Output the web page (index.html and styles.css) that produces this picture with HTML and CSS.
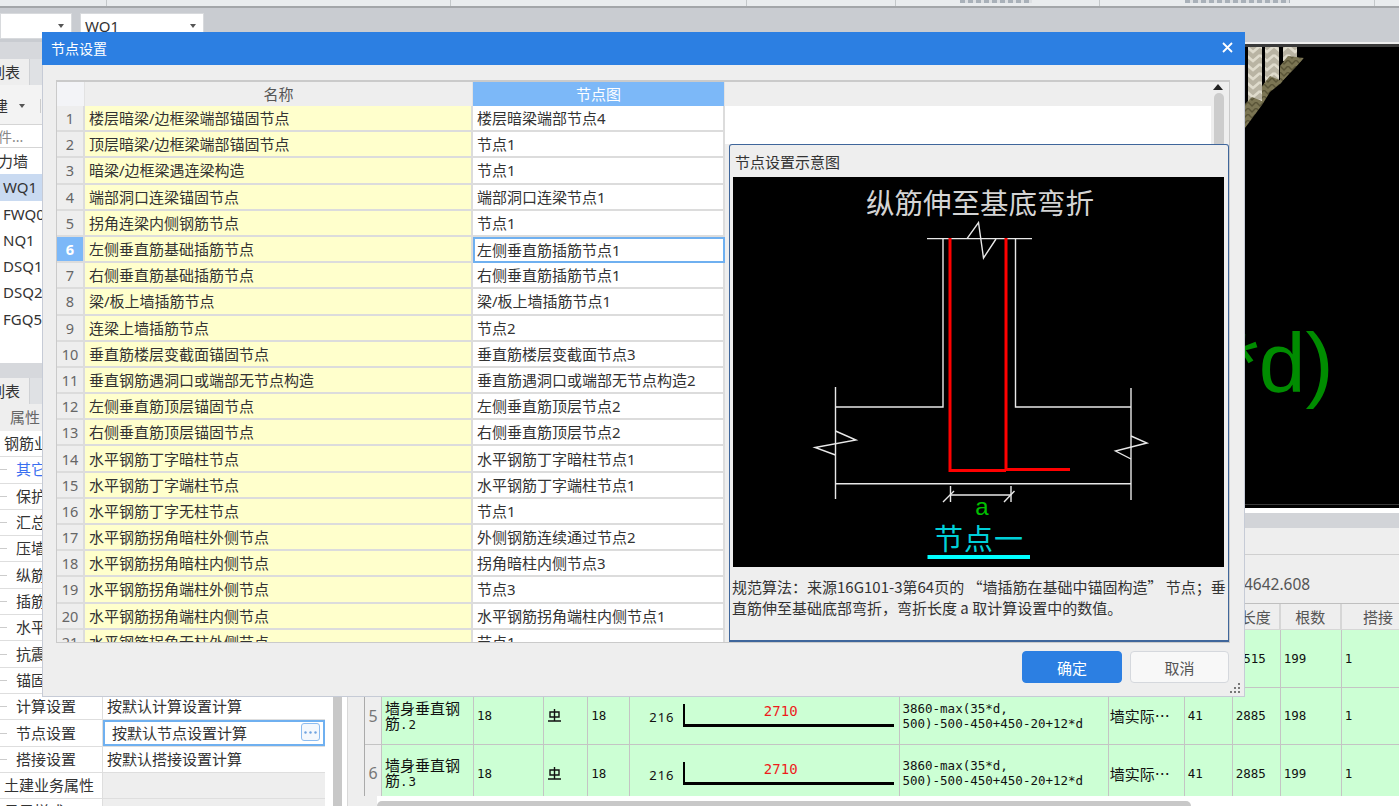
FILE: index.html
```html
<!DOCTYPE html>
<html lang="zh-CN">

<head>
    <meta charset="UTF-8">
    <meta name="viewport" content="width=device-width, initial-scale=1.0">
    <title>节点设置</title>
    <link rel="stylesheet" href="styles.css">
</head>

<body>
    <div class="ribbon">
        <div class="ribbon-cell w107"></div>
        <div class="ribbon-cell w344"></div>
        <div class="ribbon-cell w296"></div>
        <div class="ribbon-cell w149"></div>
        <div class="ribbon-cell w204"><span class="ribbon-mark mark-a"></span></div>
        <div class="ribbon-cell w275"><span class="ribbon-mark mark-b"></span></div>
    </div>

    <div class="toolbar">
        <div class="select select-first"><span class="caret"></span></div>
        <div class="select select-second">WQ1<span class="caret"></span></div>
    </div>

    <div class="main">
        <div class="left">
            <div class="panel-top">
                <div class="strip"></div>
                <div class="tab-row"><div class="tab">列表</div></div>
                <div class="tool-row"><span class="tool-new">新建</span><span class="caret"></span><span class="tool-sep"></span></div>
                <div class="search">搜索构件...</div>
                <div class="list">
                    <div class="list-item list-group">剪力墙</div>
                    <div class="list-item selected">WQ1</div>
                    <div class="list-item">FWQ0</div>
                    <div class="list-item">NQ1</div>
                    <div class="list-item">DSQ1</div>
                    <div class="list-item">DSQ2</div>
                    <div class="list-item">FGQ5</div>
                </div>
            </div>

            <div class="panel-bottom">
                <div class="strip"></div>
                <div class="tab-row"><div class="tab">列表</div></div>
                <div class="prop-head">属性</div>
                <div class="prop-body">
                    <div class="prop-table">
                        <div class="prop-row section"><div class="prop-label">钢筋业务属性</div><div class="prop-value"></div></div>
                        <div class="prop-row"><div class="prop-label tree link">其它钢筋</div><div class="prop-value"></div></div>
                        <div class="prop-row"><div class="prop-label tree">保护层厚度</div><div class="prop-value"></div></div>
                        <div class="prop-row"><div class="prop-label tree">汇总信息</div><div class="prop-value"></div></div>
                        <div class="prop-row"><div class="prop-label tree">压墙筋</div><div class="prop-value"></div></div>
                        <div class="prop-row"><div class="prop-label tree">纵筋构造</div><div class="prop-value"></div></div>
                        <div class="prop-row"><div class="prop-label tree">插筋信息</div><div class="prop-value"></div></div>
                        <div class="prop-row"><div class="prop-label tree">水平分布筋</div><div class="prop-value"></div></div>
                        <div class="prop-row"><div class="prop-label tree">抗震等级</div><div class="prop-value"></div></div>
                        <div class="prop-row"><div class="prop-label tree">锚固搭接</div><div class="prop-value"></div></div>
                        <div class="prop-row"><div class="prop-label tree">计算设置</div><div class="prop-value">按默认计算设置计算</div></div>
                        <div class="prop-row"><div class="prop-label tree">节点设置</div>
                            <div class="prop-value editing">按默认节点设置计算
                                <span class="more-btn">
                                    <svg width="13" height="3" viewBox="0 0 13 3"><circle cx="1.5" cy="1.5" r="1.2"/><circle cx="6.5" cy="1.5" r="1.2"/><circle cx="11.5" cy="1.5" r="1.2"/></svg>
                                </span>
                            </div>
                        </div>
                        <div class="prop-row"><div class="prop-label tree">搭接设置</div><div class="prop-value">按默认搭接设置计算</div></div>
                        <div class="prop-row section grey"><div class="prop-label">土建业务属性</div><div class="prop-value"></div></div>
                        <div class="prop-row section grey"><div class="prop-label">显示样式</div><div class="prop-value"></div></div>
                    </div>
                    <div class="prop-scroll"></div>
                </div>
            </div>
        </div>

        <div class="right">
            <div class="viewer">
                <svg class="rope" width="67" height="82" viewBox="1245 47 67 82">
                    <defs>
                        <pattern id="braid" width="14" height="9" patternUnits="userSpaceOnUse">
                            <rect width="14" height="9" fill="#b9b4a3"/>
                            <polyline points="0,1 7,7 14,1" fill="none" stroke="#dfdbcc" stroke-width="2.5"/>
                        </pattern>
                        <pattern id="strand" width="8" height="6" patternUnits="userSpaceOnUse">
                            <rect width="8" height="6" fill="#7b7553"/>
                            <polyline points="0,0 4,4 8,0" fill="none" stroke="#5a5538" stroke-width="1.5"/>
                        </pattern>
                        <clipPath id="ropeClip">
                            <polygon points="1245,47 1312,47 1301,62 1290,73 1280,84 1270,92 1262,105 1245,128"/>
                        </clipPath>
                    </defs>
                    <g clip-path="url(#ropeClip)">
                        <rect x="1248" y="47" width="14" height="56" fill="url(#braid)"/>
                        <rect x="1265" y="47" width="14" height="36" fill="url(#braid)"/>
                        <rect x="1283" y="47" width="14" height="14" fill="url(#braid)"/>
                        <polygon points="1245,104 1252,97 1264,102 1264,128 1245,128" fill="url(#strand)"/>
                        <polygon points="1262,86 1270,76 1284,82 1275,98 1262,104" fill="url(#strand)"/>
                        <polygon points="1280,66 1288,56 1304,58 1290,74 1280,84" fill="url(#strand)"/>
                        <rect x="1245" y="61" width="3" height="6" fill="#000"/>
                        <rect x="1262" y="60" width="3" height="6" fill="#000"/>
                        <rect x="1245" y="90" width="3" height="8" fill="#000"/>
                    </g>
                </svg>
                <div class="viewer-text">*d)</div>
            </div>
            <div class="splitter"></div>
            <div class="band"></div>
            <div class="info-bar"></div>
            <div class="sum-row">4642.608</div>

            <div class="steel-wrap">
                <table class="steel-table">
                    <colgroup>
                        <col class="c18"><col class="c92"><col class="c70"><col class="c44"><col class="c42"><col class="c270">
                        <col class="c208"><col class="c76"><col class="c48"><col class="c48"><col class="c61"><col class="c74">
                    </colgroup>
                    <tr class="steel-head">
                        <th></th><th>筋号</th><th>直径</th><th>级别</th><th>图号</th><th>图形</th>
                        <th>计算公式</th><th>公式描述</th><th>长度</th><th>长度</th><th>根数</th><th>搭接</th>
                    </tr>
                    <tr>
                        <td class="no">4</td>
                        <td class="name">墙身垂直钢<br>筋<span class="mono">.1</span></td>
                        <td>18</td>
                        <td><svg class="grade" width="13" height="13" viewBox="0 0 13 13"><path d="M2 3h9v5H2zM6.5 0v12M0 12h13" fill="none" stroke="#111" stroke-width="1.4"/></svg></td>
                        <td>18</td>
                        <td><div class="shape"><span class="shape-side">216</span><div class="rebar"><span>2340</span></div></div></td>
                        <td class="formula">3860-max(35*d,<br>500)-500-450+450-20+12*d</td>
                        <td class="name desc">墙实际⋯</td>
                        <td>41</td>
                        <td>2515</td>
                        <td>199</td>
                        <td>1</td>
                    </tr>
                    <tr>
                        <td class="no">5</td>
                        <td class="name">墙身垂直钢<br>筋<span class="mono">.2</span></td>
                        <td>18</td>
                        <td><svg class="grade" width="13" height="13" viewBox="0 0 13 13"><path d="M2 3h9v5H2zM6.5 0v12M0 12h13" fill="none" stroke="#111" stroke-width="1.4"/></svg></td>
                        <td>18</td>
                        <td><div class="shape"><span class="shape-side">216</span><div class="rebar"><span>2710</span></div></div></td>
                        <td class="formula">3860-max(35*d,<br>500)-500-450+450-20+12*d</td>
                        <td class="name desc">墙实际⋯</td>
                        <td>41</td>
                        <td>2885</td>
                        <td>198</td>
                        <td>1</td>
                    </tr>
                    <tr>
                        <td class="no">6</td>
                        <td class="name">墙身垂直钢<br>筋<span class="mono">.3</span></td>
                        <td>18</td>
                        <td><svg class="grade" width="13" height="13" viewBox="0 0 13 13"><path d="M2 3h9v5H2zM6.5 0v12M0 12h13" fill="none" stroke="#111" stroke-width="1.4"/></svg></td>
                        <td>18</td>
                        <td><div class="shape"><span class="shape-side">216</span><div class="rebar"><span>2710</span></div></div></td>
                        <td class="formula">3860-max(35*d,<br>500)-500-450+450-20+12*d</td>
                        <td class="name desc">墙实际⋯</td>
                        <td>41</td>
                        <td>2885</td>
                        <td>199</td>
                        <td>1</td>
                    </tr>
                </table>
            </div>
            <div class="h-scroll"><div class="h-thumb"></div></div>
        </div>
    </div>

    <!-- dialog sits over the app window -->
    <div class="dialog">
        <div class="dialog-title">
            <span>节点设置</span>
            <svg class="close-icon" width="11" height="11" viewBox="0 0 11 11"><path d="M1 1l9 9M10 1l-9 9" stroke="#fff" stroke-width="1.8" fill="none"/></svg>
        </div>

        <div class="dialog-body">
            <div class="grid">
                <table class="node-table">
                    <colgroup><col class="col-no"><col class="col-name"><col class="col-val"></colgroup>
                    <tr class="node-head"><th></th><th>名称</th><th class="active">节点图</th></tr>
                    <tr><td class="no">1</td><td class="name">楼层暗梁/边框梁端部锚固节点</td><td>楼层暗梁端部节点4</td></tr>
                    <tr><td class="no">2</td><td class="name">顶层暗梁/边框梁端部锚固节点</td><td>节点1</td></tr>
                    <tr><td class="no">3</td><td class="name">暗梁/边框梁遇连梁构造</td><td>节点1</td></tr>
                    <tr><td class="no">4</td><td class="name">端部洞口连梁锚固节点</td><td>端部洞口连梁节点1</td></tr>
                    <tr><td class="no">5</td><td class="name">拐角连梁内侧钢筋节点</td><td>节点1</td></tr>
                    <tr><td class="no current">6</td><td class="name">左侧垂直筋基础插筋节点</td><td class="focus">左侧垂直筋插筋节点1</td></tr>
                    <tr><td class="no">7</td><td class="name">右侧垂直筋基础插筋节点</td><td>右侧垂直筋插筋节点1</td></tr>
                    <tr><td class="no">8</td><td class="name">梁/板上墙插筋节点</td><td>梁/板上墙插筋节点1</td></tr>
                    <tr><td class="no">9</td><td class="name">连梁上墙插筋节点</td><td>节点2</td></tr>
                    <tr><td class="no">10</td><td class="name">垂直筋楼层变截面锚固节点</td><td>垂直筋楼层变截面节点3</td></tr>
                    <tr><td class="no">11</td><td class="name">垂直钢筋遇洞口或端部无节点构造</td><td>垂直筋遇洞口或端部无节点构造2</td></tr>
                    <tr><td class="no">12</td><td class="name">左侧垂直筋顶层锚固节点</td><td>左侧垂直筋顶层节点2</td></tr>
                    <tr><td class="no">13</td><td class="name">右侧垂直筋顶层锚固节点</td><td>右侧垂直筋顶层节点2</td></tr>
                    <tr><td class="no">14</td><td class="name">水平钢筋丁字暗柱节点</td><td>水平钢筋丁字暗柱节点1</td></tr>
                    <tr><td class="no">15</td><td class="name">水平钢筋丁字端柱节点</td><td>水平钢筋丁字端柱节点1</td></tr>
                    <tr><td class="no">16</td><td class="name">水平钢筋丁字无柱节点</td><td>节点1</td></tr>
                    <tr><td class="no">17</td><td class="name">水平钢筋拐角暗柱外侧节点</td><td>外侧钢筋连续通过节点2</td></tr>
                    <tr><td class="no">18</td><td class="name">水平钢筋拐角暗柱内侧节点</td><td>拐角暗柱内侧节点3</td></tr>
                    <tr><td class="no">19</td><td class="name">水平钢筋拐角端柱外侧节点</td><td>节点3</td></tr>
                    <tr><td class="no">20</td><td class="name">水平钢筋拐角端柱内侧节点</td><td>水平钢筋拐角端柱内侧节点1</td></tr>
                    <tr><td class="no">21</td><td class="name">水平钢筋拐角无柱外侧节点</td><td>节点1</td></tr>
                </table>

                <div class="grid-side">
                    <div class="side-top">
                        <div class="side-blank">
                            <div class="side-head"></div>
                        </div>
                        <div class="side-scroll">
                            <span class="scroll-up"></span>
                            <div class="scroll-thumb"></div>
                        </div>
                    </div>

                    <div class="preview">
                        <div class="preview-title">节点设置示意图</div>
                        <svg class="drawing" width="491" height="390" viewBox="733 177 491 390">
                            <text class="draw-title" x="980" y="214" text-anchor="middle">纵筋伸至基底弯折</text>

                            <g fill="none" stroke="#e8e8e8" stroke-width="1.4">
                                <path d="M927 238.6H1032"/>
                                <path d="M967 238.6L978.5 222.5L983.5 258L996 239"/>
                                <path d="M943 238.6V407H835.5"/>
                                <path d="M1015.5 238.6V407H1131"/>
                                <path d="M835.5 387V499"/>
                                <path d="M1131 388V500"/>
                                <path d="M835.5 483.7H1131"/>
                                <path d="M835.5 431L856 440L815 447.5L835.5 455"/>
                                <path d="M1131 436L1147 443L1115.5 451L1131 459"/>
                                <path d="M950 495H1011"/>
                                <path d="M950.5 486V502M1011 486V502"/>
                                <path d="M943 502L954 491M1004 502L1014.5 491"/>
                            </g>

                            <g fill="none" stroke="#ff0000" stroke-width="3">
                                <path d="M950 238V470.5H1006"/>
                                <path d="M1006 238V470"/>
                                <path d="M1006 469.5H1070"/>
                            </g>

                            <text class="draw-a" x="982" y="515" text-anchor="middle">a</text>
                            <text class="draw-node" x="979" y="550" text-anchor="middle">节点一</text>
                            <rect x="927.5" y="555" width="102.5" height="4" fill="#00ffff"/>
                        </svg>
                        <div class="preview-text">规范算法：来源16G101-3第64页的 “墙插筋在基础中锚固构造” 节点；垂直筋伸至基础底部弯折，弯折长度 a 取计算设置中的数值。</div>
                    </div>
                </div>
            </div>
        </div>

        <div class="dialog-footer">
            <button class="btn btn-primary" type="button">确定</button>
            <button class="btn btn-cancel" type="button">取消</button>
        </div>
        <svg class="grip" width="10" height="10" viewBox="0 0 10 10"><path d="M8 0h2v2H8zM4 4h2v2H4zM8 4h2v2H8zM0 8h2v2H0zM4 8h2v2H4zM8 8h2v2H8z" fill="#777"/></svg>
    </div>
</body>

</html>
```

FILE: styles.css
```css
* {
    margin: 0;
    padding: 0;
    box-sizing: border-box;
    font-family: "Noto Sans", "Noto Sans CJK SC", sans-serif;
}

body {
    position: relative;
    width: 1399px;
    height: 806px;
    overflow: hidden;
    background-color: #eeeeee;
    color: #333;
    font-size: 15px;
}

/* top of the app window */
.ribbon {
    display: flex;
    height: 8px;
    background-color: #e9ecee;
    border-bottom: 2px solid #a3a6a9;
}

.ribbon-cell {
    position: relative;
    height: 6px;
    border-right: 1px solid #c4c8ca;
}

.w107 { width: 107px; }
.w344 { width: 344px; }
.w296 { width: 296px; }
.w149 { width: 149px; }
.w204 { width: 204px; }
.w275 { width: 275px; }

.ribbon-mark {
    position: absolute;
    top: 0;
    height: 3px;
    background: repeating-linear-gradient(90deg, #a9b1b9 0 5px, #dde0e3 5px 8px);
}

.mark-a { left: 64px; width: 72px; }
.mark-b { left: 85px; width: 105px; }

.toolbar {
    display: flex;
    gap: 8px;
    height: 34px;
    padding-top: 5px;
    background-color: #c9ccd1;
}

.select {
    position: relative;
    height: 26px;
    padding: 2px 4px;
    background-color: #fff;
    border: 1px solid #d8dadd;
    line-height: 20px;
}

.select-first { width: 72px; }
.select-second { width: 124px; }

.caret {
    display: inline-block;
    width: 0;
    height: 0;
    border-left: 3.5px solid transparent;
    border-right: 3.5px solid transparent;
    border-top: 4px solid #555;
}

.select .caret {
    position: absolute;
    right: 7px;
    top: 10px;
}

.main {
    display: flex;
    height: 764px;
}

/* left column */
.left {
    width: 347px;
    flex-shrink: 0;
    overflow: hidden;
    background-color: #fff;
}

.panel-top {
    height: 321px;
    overflow: hidden;
}

.strip {
    height: 15px;
    background-color: #d6d8dc;
}

.panel-top .strip {
    height: 17px;
}

.tab-row {
    height: 26px;
    background-color: #dfe1e4;
}

.tab {
    width: 50px;
    height: 26px;
    margin-left: -20px;
    padding-left: 10px;
    line-height: 26px;
    background-color: #eeeeee;
    border-right: 1px solid #cfd1d4;
}

.tool-row {
    display: flex;
    align-items: center;
    height: 39px;
    padding-top: 2px;
    background-color: #f3f3f3;
}

.tool-new {
    margin-left: -22px;
    margin-right: 11px;
}

.tool-sep {
    width: 1px;
    height: 14px;
    margin-left: 15px;
    background-color: #ccc;
}

.search {
    height: 24px;
    margin-left: -44px;
    line-height: 23px;
    font-size: 14px;
    color: #888;
    border-top: 1px solid #d5d5d5;
    border-bottom: 1px solid #d5d5d5;
    white-space: nowrap;
}

.list-item {
    height: 26.3px;
    padding-left: 3px;
    line-height: 26px;
    background-color: #fff;
    white-space: nowrap;
}

.list-group {
    margin-left: -17px;
    padding-left: 0;
}

.list-item.selected {
    background-color: #c9daf1;
}

.prop-head {
    height: 27px;
    padding-left: 10px;
    line-height: 27px;
    color: #666;
    background-color: #eeeeee;
}

.prop-body {
    display: flex;
}

.prop-table {
    width: 325px;
    flex-shrink: 0;
}

.prop-row {
    display: grid;
    grid-template-columns: 103px 222px;
    height: 26.3px;
    line-height: 25px;
    border-bottom: 1px solid #dedede;
}

.prop-label {
    display: flex;
    align-items: center;
    padding-left: 4px;
    white-space: nowrap;
    border-right: 1px solid #dedede;
    overflow: hidden;
}

.prop-label.tree {
    padding-left: 0;
}

.prop-label.tree::before {
    content: "";
    flex-shrink: 0;
    width: 7px;
    height: 1px;
    margin-right: 9px;
    background-color: #ccc;
}

.prop-label.link {
    color: #3a6ff0;
}

.prop-value {
    position: relative;
    padding-left: 4px;
    white-space: nowrap;
}

.prop-row.grey .prop-value {
    background-color: #eeeeee;
}

.prop-value.editing {
    padding-left: 7px;
    line-height: 22px;
    border: 2px solid #6fb0f0;
}

.more-btn {
    position: absolute;
    right: 3px;
    top: 1px;
    display: flex;
    align-items: center;
    justify-content: center;
    width: 19px;
    height: 18px;
    background-color: #f4f8fd;
    border: 1px solid #8cbcf0;
    border-radius: 3px;
    fill: #6fa3e0;
}

.prop-scroll {
    width: 9px;
    height: 500px;
    margin-left: 8px;
    background-color: #c8c8c8;
}

/* right column */
.right {
    flex: 1;
    min-width: 0;
    border-left: 1px solid #d8d8d8;
    overflow: hidden;
}

.viewer {
    position: relative;
    height: 464px;
    margin-top: 2px;
    overflow: hidden;
    background-color: #000;
    border-top: 3px solid #3a3a3a;
    border-bottom: 3px solid #000;
    box-shadow: inset 0 -1px 0 #3a3a3a;
}

.rope {
    position: absolute;
    right: 87px;
    top: 0;
}

/* text on the 3d canvas */
.viewer-text {
    position: absolute;
    left: 878px;
    top: 266px;
    font-family: "Liberation Sans", sans-serif;
    font-size: 84px;
    line-height: 100px;
    color: #008c00;
    white-space: nowrap;
}

.splitter {
    height: 5px;
    background-color: #fff;
}

.band {
    height: 15px;
    background-color: #d2d4d8;
}

.info-bar {
    height: 27px;
    background-color: #eeeeee;
    border-bottom: 1px solid #cfcfcf;
}

.sum-row {
    height: 49px;
    padding: 19px 0 0 896px;
    line-height: 20px;
    color: #555;
    font-size: 15.5px;
    background-color: #eeeeee;
    border-bottom: 1px solid #bfbfbf;
}

.steel-wrap {
    height: 192px;
    margin-left: 16px;
    overflow: hidden;
    border-left: 1px solid #aaa;
}

.steel-table {
    width: 1051px;
    table-layout: fixed;
    border-collapse: separate;
    border-spacing: 0;
}

.c18 { width: 17px; }
.c92 { width: 92px; }
.c70 { width: 70px; }
.c44 { width: 44px; }
.c42 { width: 42px; }
.c270 { width: 270px; }
.c208 { width: 208px; }
.c76 { width: 76px; }
.c48 { width: 48px; }
.c61 { width: 61px; }
.c74 { width: 74px; }

.steel-head th {
    height: 26px;
    font-weight: normal;
    color: #555;
    background-color: #eeeeee;
    border-right: 2px solid #d6d6d6;
    border-bottom: 1px solid #d6d6d6;
}

.steel-table td {
    height: 57.5px;
    padding-left: 3px;
    font-family: "DejaVu Sans Mono", "Noto Sans CJK SC", monospace;
    font-size: 12.5px;
    color: #111;
    background-color: #ccffd4;
    border-right: 1px solid #c4c4c4;
    border-bottom: 1px solid #c4c4c4;
    white-space: nowrap;
}

.steel-table td.no {
    padding-left: 0;
    text-align: center;
    font-family: "Noto Sans", sans-serif;
    font-size: 16px;
    color: #777;
    background-color: #eeeeee;
}

.steel-table td.name {
    padding-left: 3px;
    font-family: "Noto Sans CJK SC", sans-serif;
    font-size: 15px;
    line-height: 15px;
}

.steel-table td.desc {
    padding-left: 1px;
}

.mono {
    font-family: "DejaVu Sans Mono", monospace;
    font-size: 12.5px;
    letter-spacing: 1px;
}

.steel-table td.formula {
    padding-left: 2px;
    line-height: 15px;
}

.grade {
    display: block;
    margin-left: 1px;
}

.shape {
    display: flex;
    align-items: flex-end;
    padding-left: 16px;
}

.shape-side {
    width: 34px;
    padding-bottom: 1px;
    font-size: 13px;
    letter-spacing: 1px;
}

.rebar {
    width: 211px;
    height: 23px;
    border-left: 2px solid #000;
    border-bottom: 3px solid #000;
    text-align: center;
    line-height: 13px;
    color: #ee1c1c;
    font-size: 14px;
}

.rebar span {
    font-family: "DejaVu Sans Mono", monospace;
    position: relative;
    left: -9px;
}

.h-scroll {
    height: 11px;
    margin-left: 29px;
    padding-top: 5px;
    background-color: #fff;
}

.h-thumb {
    width: 814px;
    height: 12px;
    background-color: #c8c8c8;
    border-radius: 5px;
}

/* dialog */
.dialog {
    position: absolute;
    left: 42px;
    top: 32px;
    width: 1203px;
    height: 665px;
    background-color: #eeeeee;
    border-right: 1px solid #c6cbd6;
    border-bottom: 1px solid #c6cbd6;
    border-left: 1px solid #c6cbd6;
}

.dialog-title {
    display: flex;
    align-items: center;
    justify-content: space-between;
    height: 33px;
    margin: 0 -1px;
    padding: 0 12px 2px 9px;
    color: #fff;
    font-size: 14px;
    background-color: #2c7fe2;
}

.dialog-body {
    padding: 15px 14px 0 13px;
}

.grid {
    display: flex;
    height: 563px;
    overflow: hidden;
    background-color: #eeeeee;
    border: 1px solid #cacaca;
    border-top-width: 2px;
}

.node-table {
    width: 668px;
    flex-shrink: 0;
    align-self: flex-start;
    table-layout: fixed;
    border-collapse: separate;
    border-spacing: 0;
}

.col-no { width: 28px; }
.col-name { width: 388px; }
.col-val { width: 252px; }

.node-head th {
    height: 24px;
    padding-bottom: 2px;
    font-weight: normal;
    color: #555;
    background-color: #eeeeee;
    border-right: 1px solid #e2e2e2;
}

.node-head th:first-child {
    background-color: #f3f4f7;
}

.node-head th.active {
    color: #fff;
    background-color: #7cb8f8;
}

.node-table td {
    height: 26.2px;
    padding: 0 0 0 4px;
    line-height: 22px;
    background-color: #fff;
    border-bottom: 2px solid #dcdcdc;
    border-right: 2px solid #dcdcdc;
    white-space: nowrap;
    overflow: hidden;
}

.node-table td.no {
    padding: 0;
    text-align: center;
    color: #666;
    font-size: 14.5px;
    background-color: #eeeeee;
}

.node-table td.no.current {
    color: #fff;
    font-weight: bold;
    background-color: #7cb8f8;
}

.node-table td.name {
    background-color: #ffffcc;
}

.node-table td.focus {
    padding-left: 2px;
    border: 2px solid #6fb0f0;
}

.grid-side {
    flex: 1;
    min-width: 0;
}

.side-top {
    display: flex;
    height: 62px;
}

.side-blank {
    flex: 1;
    background-color: #fff;
}

.side-head {
    height: 24px;
    background-color: #eeeeee;
}

.side-scroll {
    position: relative;
    width: 18px;
    padding: 11px 3px 0 3px;
    background-color: #eeeeee;
}

.scroll-up {
    position: absolute;
    left: 2px;
    top: 2px;
    width: 0;
    height: 0;
    border-left: 5px solid transparent;
    border-right: 5px solid transparent;
    border-bottom: 6px solid #222;
}

.scroll-thumb {
    width: 10px;
    height: 51px;
    background-color: #cccccc;
    border-radius: 5px 5px 0 0;
}

.preview {
    height: 498px;
    margin-left: 4px;
    padding: 0 0 0 3px;
    background-color: #eeeeee;
    border: 1px solid #3f669b;
    border-bottom-width: 2px;
    border-radius: 3px 3px 0 0;
}

.preview-title {
    height: 32px;
    padding-left: 2px;
    line-height: 35px;
    color: #333;
    white-space: nowrap;
}

.drawing {
    display: block;
    background-color: #000;
}

.draw-title {
    font-size: 28.5px;
    fill: #d4d4d4;
}

.draw-a {
    font-family: "Liberation Sans", sans-serif;
    font-size: 24px;
    fill: #00c000;
}

.draw-node {
    font-size: 29px;
    fill: #00d0d8;
    letter-spacing: 1px;
}

.preview-text {
    width: 497px;
    margin: 10px 0 0 -1px;
    font-family: "Noto Sans CJK SC", sans-serif;
    line-height: 20.5px;
    color: #333;
}

.dialog-footer {
    display: flex;
    justify-content: flex-end;
    gap: 8px;
    padding: 8px 15px 0 0;
}

.btn {
    width: 100px;
    height: 32px;
    font-size: 15px;
    color: #555;
    background-color: #f8f8f8;
    border: 1.5px solid #d5d8dd;
    border-radius: 4px;
}

.btn-cancel {
    width: 99px;
}

.btn-primary {
    color: #fff;
    background-color: #2c7fe2;
    border-color: #2c7fe2;
}

.grip {
    position: absolute;
    right: 4px;
    bottom: 3px;
}
```
